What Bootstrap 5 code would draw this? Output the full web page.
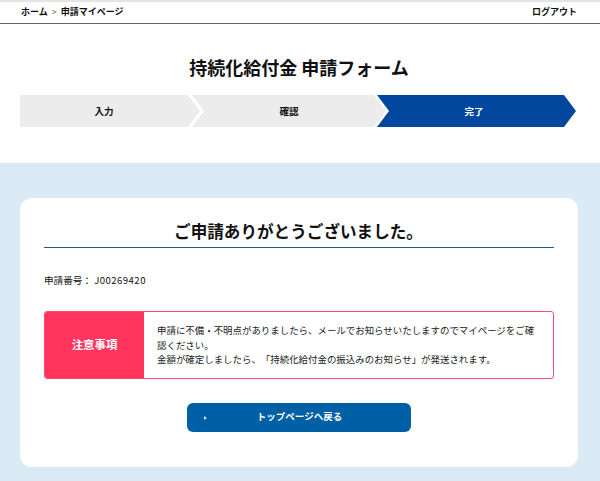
<!DOCTYPE html>
<html lang="ja">
<head>
<meta charset="utf-8">
<title>申請フォーム</title>
<link rel="stylesheet" href="https://cdn.jsdelivr.net/npm/bootstrap@5.3.0/dist/css/bootstrap.min.css">
<style>
html,body{height:481px;overflow:hidden}
body{font-family:"Noto Sans CJK JP","Liberation Sans",sans-serif;color:#111;background:#fff;text-spacing-trim:space-all}
.topbar{height:24px;border-top:2px solid #e4e4e4;border-bottom:1px solid #666;padding:0 23px 2px 21px;font-size:9px;font-weight:700}
.topbar .sep{font-weight:400;color:#666;margin:0 4px}
.form-title{font-size:18px;font-weight:700;line-height:26px;margin:30px 0 15px;text-align:center;padding-right:2px}
.stepper{padding-left:20px;height:32px;margin-bottom:36px}
.stepitem{height:32px;font-size:9.5px;font-weight:700;background:#ececec;clip-path:polygon(0 0,calc(100% - 12px) 0,100% 50%,calc(100% - 12px) 100%,0 100%,12px 50%)}
.stepitem.s1{width:180px;padding-right:12px;clip-path:polygon(0 0,calc(100% - 12px) 0,100% 50%,calc(100% - 12px) 100%,0 100%)}
.stepitem.s2{width:194px;margin-left:-8px}
.stepitem.s3{width:199px;margin-left:-9px;padding-right:5px;background:#00479d;color:#fff}
.bluearea{background:#daebf6;height:318px;padding:35px 22px 0 20px}
.donecard{background:#fff;border-radius:12px;height:269px;padding:0 24px}
.donehead{font-size:16.6px;font-weight:700;line-height:26px;padding:20px 1px 0 0;height:50px;border-bottom:1px solid #1d5c90;text-align:center;margin:0}
.appno{font-size:9.6px;line-height:14px;margin:25px 0 24px}
.appcode{letter-spacing:.45px}
.noticebox{height:68px;width:510px;border:1px solid #ff4a6e;border-radius:3px;overflow:hidden}
.noticehead{width:99px;flex-shrink:0;background:#ff355e;color:#fff;font-size:11.4px;font-weight:700}
.noticebody{padding:0 15px 0 13px;font-size:9.45px;line-height:14.6px;color:#222}
.backbtn{width:224px;height:29px;background:#0060a5;border:0;border-radius:6px;color:#fff;font-size:9.5px;font-weight:700;margin:24px auto 0;position:relative;display:flex;align-items:center;justify-content:center;padding:0 0 2px 1px}
.backbtn:hover{background:#0060a5;color:#fff}
.arrowmark{position:absolute;left:17px;top:13px;width:0;height:0;border-left:3px solid #cfe0ee;border-top:2px solid transparent;border-bottom:2px solid transparent}
</style>
</head>
<body>
<div class="topbar d-flex justify-content-between align-items-center">
  <div>ホーム<span class="sep">&gt;</span>申請マイページ</div>
  <div>ログアウト</div>
</div>
<h1 class="form-title">持続化給付金 申請フォーム</h1>
<div class="stepper d-flex">
  <div class="stepitem s1 d-flex align-items-center justify-content-center">入力</div>
  <div class="stepitem s2 d-flex align-items-center justify-content-center">確認</div>
  <div class="stepitem s3 d-flex align-items-center justify-content-center">完了</div>
</div>
<div class="bluearea">
  <div class="donecard">
    <h2 class="donehead">ご申請ありがとうございました。</h2>
    <p class="appno">申請番号： <span class="appcode">J00269420</span></p>
    <div class="noticebox d-flex">
      <div class="noticehead d-flex align-items-center justify-content-center">注意事項</div>
      <div class="noticebody flex-fill d-flex align-items-center">
        <div>申請に不備・不明点がありましたら、メールでお知らせいたしますのでマイページをご確認ください。<br>金額が確定しましたら、「持続化給付金の振込みのお知らせ」が発送されます。</div>
      </div>
    </div>
    <a class="btn backbtn" href="#"><span class="arrowmark"></span>トップページへ戻る</a>
  </div>
</div>
<script src="https://cdn.jsdelivr.net/npm/bootstrap@5.3.0/dist/js/bootstrap.bundle.min.js"></script>
</body>
</html>
